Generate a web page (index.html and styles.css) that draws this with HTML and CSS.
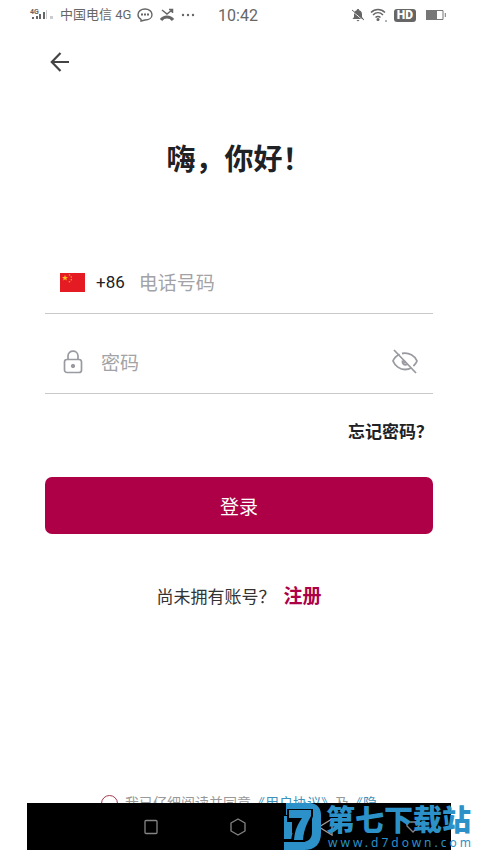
FILE: index.html
```html
<!DOCTYPE html>
<html lang="zh-CN">
<head>
<meta charset="utf-8">
<meta name="viewport" content="width=device-width, initial-scale=1">
<title>登录</title>
<link rel="stylesheet" href="styles.css">
</head>
<body>
<div class="phone">
  <header class="status">
    <div class="status-group">
      <svg class="signal" width="24" height="16" viewBox="0 0 24 16" aria-hidden="true">
        <text class="signal-label" x="0" y="7">4G</text>
        <g fill="#666"><path d="M2 10h2v2H2zM6 9h2v3H6zM9 7h2v5H9zM13 5h2v7h-2z"/><path fill="#ccc" d="M16 3h1v9h-1zM20 9h3v3h-3z"/></g>
      </svg>
      <span class="carrier">中国电信 4G</span>
      <svg width="16" height="14" viewBox="0 0 16 14" aria-hidden="true" fill="none" stroke="#666" stroke-width="1.4"><path d="M4 11.3C2 10.3 1 8.500 1 6.700 1 3.500 4 1 8 1s7 2.500 7 5.700-3 5.300-7 5.300L4 13z"/><path d="M4 6.500h2M7 6.500h2M10 6.500h2" stroke-width="1.800"/></svg>
      <svg width="16" height="14" viewBox="0 0 16 14" aria-hidden="true" fill="none" stroke="#666" stroke-width="1.500"><path d="M3 2l5 4 5-4M10 1.500h3.500V5"/><path d="M2 12c3-4 9-4 12 0" stroke-width="3"/></svg>
      <svg width="14" height="14" viewBox="0 0 14 14" aria-hidden="true" fill="#666"><circle cx="2" cy="7" r="1.200"/><circle cx="7" cy="7" r="1.200"/><circle cx="12" cy="7" r="1.200"/></svg>
    </div>
    <time class="clock">10:42</time>
    <div class="status-group status-right">
      <svg width="12" height="14" viewBox="0 0 12 14" aria-hidden="true"><path fill="#666" d="M6 1c.8 0 1.200.5 1.200 1.200C9 2.800 10 4.200 10 6v3l1.500 2H.5L2 9V6c0-1.800 1-3.200 2.800-3.800C4.800 1.500 5.200 1 6 1zM4.500 12h3L6 13.500z"/><path d="M0 3l11 9" stroke="#fff"/><path d="M0 2l12 10" stroke="#666"/></svg>
      <svg width="18" height="16" viewBox="0 0 18 16" aria-hidden="true" fill="none" stroke="#666" stroke-width="1.500"><path d="M1 5.500c4-4 10-4 14 0M3 8c3-3 7-3 10 0M5.500 10.500c1.500-1.500 3.500-1.500 5 0"/><circle cx="8" cy="12.500" r=".8" fill="#666"/><path d="M16 13v2" stroke-width="1"/></svg>
      <span class="hd">HD</span>
      <svg class="battery" width="20" height="12" viewBox="0 0 20 12" aria-hidden="true"><path fill="#777" d="M0 1h11v10H0z"/><path d="M1 1.500h16v9H1zM19.300 4v4" fill="none" stroke="#777"/></svg>
    </div>
  </header>

  <main class="screen">
    <button class="icon-button back" type="button" aria-label="返回">
      <svg width="20" height="20" viewBox="0 0 20 20" fill="none" stroke="#444" stroke-width="2.200"><path d="M19 10H2M10.500 1L1.800 10l8.700 9"/></svg>
    </button>
    <h1>嗨，你好！</h1>

    <form>
      <div class="field">
        <label class="region" for="phone">
          <svg width="25" height="19" viewBox="0 0 25 19" role="img" aria-label="中国">
            <path fill="#e51b24" d="M0 0h25v19H0z"/>
            <path fill="#fb2" d="M5 2l.8 2h2.200L6.200 5.400l.7 2.200L5 6.300 3.100 7.600l.7-2.200L2 4h2.200z"/>
            <g fill="#f9a02c"><circle cx="9.500" cy="2" r=".8"/><circle cx="11.300" cy="4" r=".8"/><circle cx="11.300" cy="6.700" r=".8"/><circle cx="9.500" cy="8.700" r=".8"/></g>
          </svg>
          <span>+86</span>
        </label>
        <input id="phone" type="tel" placeholder="电话号码">
      </div>
      <div class="field">
        <label class="lock" for="password" aria-label="密码">
          <svg width="20" height="24" viewBox="0 0 20 24" fill="none" stroke="#999ba0" stroke-width="1.700"><rect x="1.500" y="9.500" width="17" height="13" rx="2.500"/><path d="M5 9.500V6c0-6.500 10-6.500 10 0v3.500"/><circle cx="10" cy="16" r="1.700" fill="#999ba0" stroke-width="1"/></svg>
        </label>
        <input id="password" type="password" placeholder="密码">
        <button class="icon-button" type="button" aria-label="显示密码">
          <svg width="28" height="26" viewBox="0 0 28 26" fill="none" stroke="#999ba0" stroke-width="1.800"><path d="M8.500 5.300C5.500 6.800 3 9.500 2 12c2 5 7 8.500 12 8.500 2.200 0 4.300-.5 6.200-1.500M11 4.500C18 3 24 7 26 12c-.8 2-2 3.700-3.600 5"/><path d="M11.500 11.500c-.5 3 1.500 5 4.500 4M3 1l22 23"/><circle cx="13.500" cy="13" r="1.500" fill="#999ba0" stroke="none"/></svg>
        </button>
      </div>
      <a class="forgot" href="#">忘记密码？</a>
      <button class="login" type="submit">登录</button>
    </form>

    <p class="signup"><span>尚未拥有账号？</span><a href="#">注册</a></p>

    <div class="consent">
      <input id="agree" type="checkbox">
      <label for="agree">我已仔细阅读并同意<a href="#">《用户协议》</a>及<a href="#">《隐</a></label>
    </div>
  </main>

  <nav class="navbar" aria-label="系统导航">
    <button class="icon-button" type="button" aria-label="最近任务"><svg width="18" height="18" viewBox="0 0 18 18" fill="none" stroke="#858585" stroke-width="1.300"><rect x="3" y="2.500" width="12" height="13" rx="1"/></svg></button>
    <button class="icon-button" type="button" aria-label="主页"><svg width="18" height="18" viewBox="0 0 18 18" fill="none" stroke="#858585" stroke-width="1.300"><path d="M9 1l7 4v8l-7 4-7-4V5z" stroke-linejoin="round"/></svg></button>
    <button class="icon-button" type="button" aria-label="后退"><svg width="18" height="18" viewBox="0 0 18 18" fill="none" stroke="#a59994" stroke-width="1.300"><path d="M15 1v16L2 9z"/></svg></button>
    <button class="icon-button" type="button" aria-label="收起"><svg width="18" height="18" viewBox="0 0 18 18" fill="none" stroke="#858585" stroke-width="1.300"><path d="M3 4h12v4l-6 6-6-6z"/></svg></button>
  </nav>
</div>

<aside class="watermark">
  <svg width="37" height="48" viewBox="0 0 37 48" aria-hidden="true">
    <path fill="#2b91c8" d="M2 1h23c8 0 12 5 12 12v18c0 11-6 17-17 17H0v-8h17c7 0 11-3 11-10V13H2z"/>
    <path fill="#2b91c8" d="M0 14h14v6H8v11h6v6H0z"/>
    <path fill="#000" d="M3 7h26v7c-2 7-6 12-8 26H7c1-10 3-14 7-20H3z"/>
    <path fill="#2b91c8" d="M2 1h25v6H2z"/>
    <path fill="#2b91c8" d="M5 8h22v6c-3 6-7 12-8 24h-9c1-11 4-16 8-22H5z"/>
  </svg>
  <div class="watermark-text"><strong>第七下载站</strong><span>www.d7down.com</span></div>
</aside>
</body>
</html>
```
FILE: styles.css
```css
* { box-sizing: border-box; }

body {
  position: relative;
  margin: 0;
  background: #fff;
  color: #202124;
  font-family: Roboto, "Noto Sans CJK SC", sans-serif;
  overflow: hidden;
}

button, input { font: inherit; }
a { text-decoration: none; }
svg { display: block; flex: none; }

.phone {
  display: flex;
  flex-direction: column;
  height: 100vh;
  padding: 0 27px;
}

.status {
  display: grid;
  grid-template-columns: 1fr auto 1fr;
  align-items: center;
  height: 30px;
  padding: 0 5px 0 3px;
  color: #666;
  font-size: 16px;
}
.status-group {
  display: flex;
  align-items: center;
  gap: 6px;
  white-space: nowrap;
}
.status-right { justify-content: flex-end; }
.signal-label { font-size: 7px; font-weight: 700; fill: #666; }
.carrier { font-size: 13px; line-height: 16px; }
.hd {
  padding: 0 3px;
  border-radius: 3px;
  background: #666;
  color: #fff;
  font-size: 12px;
  font-weight: 900;
  line-height: 13px;
}
.battery { margin-left: 4px; }

.screen {
  display: flex;
  flex: 1;
  flex-direction: column;
  min-height: 0;
  padding: 0 18px;
  overflow: hidden;
}

.icon-button {
  padding: 0;
  border: 0;
  background: none;
}
.back {
  align-self: flex-start;
  margin: 22px 0 0 5px;
}

h1 {
  margin: 67px 0 53px;
  font-size: 29px;
  line-height: 42px;
  text-align: center;
}

.field {
  display: flex;
  align-items: center;
  height: 80px;
  padding: 17px 14px 0 15px;
  border-bottom: 1px solid #c9c9cb;
}
.field input {
  flex: 1;
  min-width: 0;
  padding: 2px 0 0;
  border: 0;
  outline: 0;
  background: none;
  font-size: 19px;
}
.field input::placeholder { color: #a3a3a7; opacity: 1; }
.region {
  display: flex;
  align-items: center;
  gap: 11px;
  margin-right: 14px;
  font-size: 17px;
}
.lock { margin: 0 18px 0 3px; }

.forgot {
  display: block;
  margin: 26px 0 32px;
  color: #202124;
  font-size: 17px;
  font-weight: 700;
  line-height: 25px;
  text-align: right;
}

.login {
  display: block;
  width: 100%;
  height: 57px;
  padding: 0;
  border: 0;
  border-radius: 7px;
  background: #ad0046;
  color: #fff;
  font-size: 19px;
}

.signup {
  display: flex;
  align-items: center;
  justify-content: center;
  gap: 8px;
  margin: 48px 0 0;
  color: #333;
  font-size: 17px;
  line-height: 30px;
}
.signup a { color: #ad0046; font-size: 19px; font-weight: 700; }

.consent {
  display: flex;
  align-items: center;
  justify-content: center;
  gap: 7px;
  height: 20px;
  margin: auto 0 -10px;
  color: #999;
  font-size: 14px;
  line-height: 20px;
  white-space: nowrap;
}
.consent input {
  width: 17px;
  height: 17px;
  margin: 0;
  border: 1px solid #a53a50;
  border-radius: 50%;
  appearance: none;
}
.consent a { color: #3e91ba; }

.navbar {
  display: flex;
  flex: none;
  align-items: center;
  justify-content: space-between;
  height: 47px;
  padding: 0 29px 0 115px;
  background: #000;
}

.watermark {
  position: absolute;
  right: 4px;
  bottom: 0;
  display: flex;
  align-items: flex-end;
  gap: 5px;
  color: #2b91c8;
  pointer-events: none;
}
.watermark-text { display: flex; flex-direction: column; }
.watermark strong {
  font-size: 29px;
  font-weight: 900;
  line-height: 30px;
}
.watermark span {
  padding-left: 2px;
  font-family: "Noto Sans", sans-serif;
  font-size: 12px;
  letter-spacing: 3px;
  line-height: 14px;
}
```
